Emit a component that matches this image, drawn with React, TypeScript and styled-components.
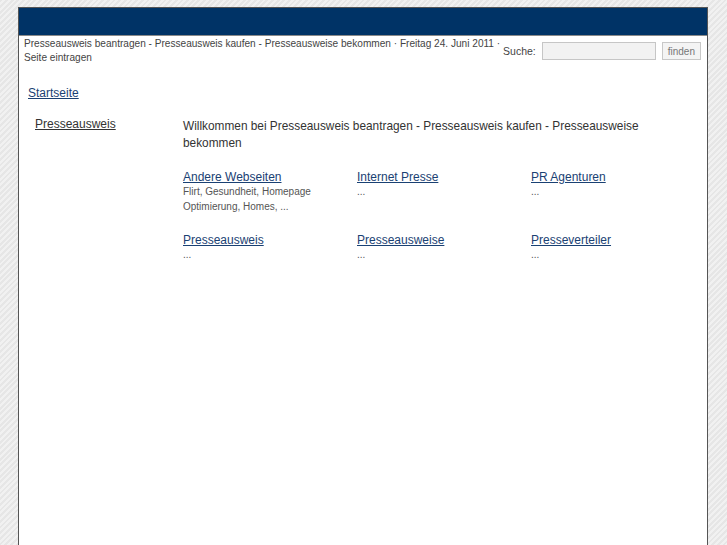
import * as React from 'react';
import styled, { createGlobalStyle } from 'styled-components';

const GlobalStyle = createGlobalStyle`
  html, body {
    margin: 0;
    padding: 0;
    overflow: hidden;
  }
  body {
    min-height: 545px;
    font-family: 'Liberation Sans', Arial, sans-serif;
    background-color: #e8e8e8;
    background-image: repeating-linear-gradient(
      135deg,
      #e6e6e6 0px,
      #e6e6e6 2px,
      #f1f1f1 2px,
      #f1f1f1 4px
    );
  }
`;

const Page = styled.div`
  margin: 7px 0 0 18px;
  width: 690px;
  min-height: 560px;
  background: #fff;
  border: 1px solid #555;
  border-bottom: none;
  box-sizing: border-box;
`;

const Header = styled.div`
  height: 27px;
  background: #003366;
  border-bottom: 1px solid #8a8a8a;
`;

const TopBar = styled.div`
  display: flex;
  justify-content: space-between;
  align-items: flex-start;
  padding: 1px 6px 0 5px;
`;

const Breadcrumb = styled.div`
  width: 478px;
  font-size: 10.1px;
  line-height: 14px;
  color: #444;
`;

const SearchForm = styled.form`
  display: flex;
  align-items: center;
  gap: 6px;
  margin-top: 5px;
  font-size: 10.5px;
  color: #444;
`;

const SearchInput = styled.input`
  width: 110px;
  height: 14px;
  padding: 1px;
  border: 1px solid #c6c6c6;
  background: #f2f2f2;
`;

const SearchButton = styled.button`
  height: 18px;
  padding: 0 5px;
  border: 1px solid #c8c8c8;
  background: #f4f4f4;
  color: #777;
  font-family: inherit;
  font-size: 10px;
`;

const Body = styled.div`
  padding: 18px 0 0 9px;
`;

const HomeLink = styled.a`
  font-size: 12px;
  color: #1a4173;
  text-decoration: underline;
`;

const Columns = styled.div`
  display: grid;
  grid-template-columns: 155px 1fr;
  margin-top: 13px;
`;

const SideNav = styled.div`
  padding-left: 7px;
`;

const SideLink = styled.a`
  font-size: 12px;
  color: #333;
  text-decoration: underline;
`;

const Main = styled.div``;

const Welcome = styled.p`
  margin: 4px 0 0;
  max-width: 470px;
  font-size: 11.85px;
  line-height: 17px;
  color: #333;
`;

const Grid = styled.div`
  display: grid;
  grid-template-columns: repeat(3, 174px);
  row-gap: 19px;
  margin-top: 18px;
`;

const Item = styled.div`
  display: flex;
  flex-direction: column;
  width: 140px;
`;

const ItemLink = styled.a`
  font-size: 12px;
  line-height: 14px;
  color: #1a4173;
  text-decoration: underline;
`;

const ItemDesc = styled.span`
  font-size: 10px;
  line-height: 15px;
  color: #555;
`;

const items = [
  { title: 'Andere Webseiten', desc: 'Flirt, Gesundheit, Homepage Optimierung, Homes, ...' },
  { title: 'Internet Presse', desc: '...' },
  { title: 'PR Agenturen', desc: '...' },
  { title: 'Presseausweis', desc: '...' },
  { title: 'Presseausweise', desc: '...' },
  { title: 'Presseverteiler', desc: '...' },
];

export default function App() {
  return (
    <>
      <GlobalStyle />
      <Page>
        <Header />
        <TopBar>
          <Breadcrumb>
            Presseausweis beantragen - Presseausweis kaufen - Presseausweise bekommen · Freitag 24.
            Juni 2011 · Seite eintragen
          </Breadcrumb>
          <SearchForm onSubmit={(e) => e.preventDefault()}>
            <span>Suche:</span>
            <SearchInput type="text" />
            <SearchButton type="submit">finden</SearchButton>
          </SearchForm>
        </TopBar>
        <Body>
          <HomeLink href="#">Startseite</HomeLink>
          <Columns>
            <SideNav>
              <SideLink href="#">Presseausweis</SideLink>
            </SideNav>
            <Main>
              <Welcome>
                Willkommen bei Presseausweis beantragen - Presseausweis kaufen - Presseausweise
                bekommen
              </Welcome>
              <Grid>
                {items.map((it) => (
                  <Item key={it.title}>
                    <ItemLink href="#">{it.title}</ItemLink>
                    <ItemDesc>{it.desc}</ItemDesc>
                  </Item>
                ))}
              </Grid>
            </Main>
          </Columns>
        </Body>
      </Page>
    </>
  );
}
